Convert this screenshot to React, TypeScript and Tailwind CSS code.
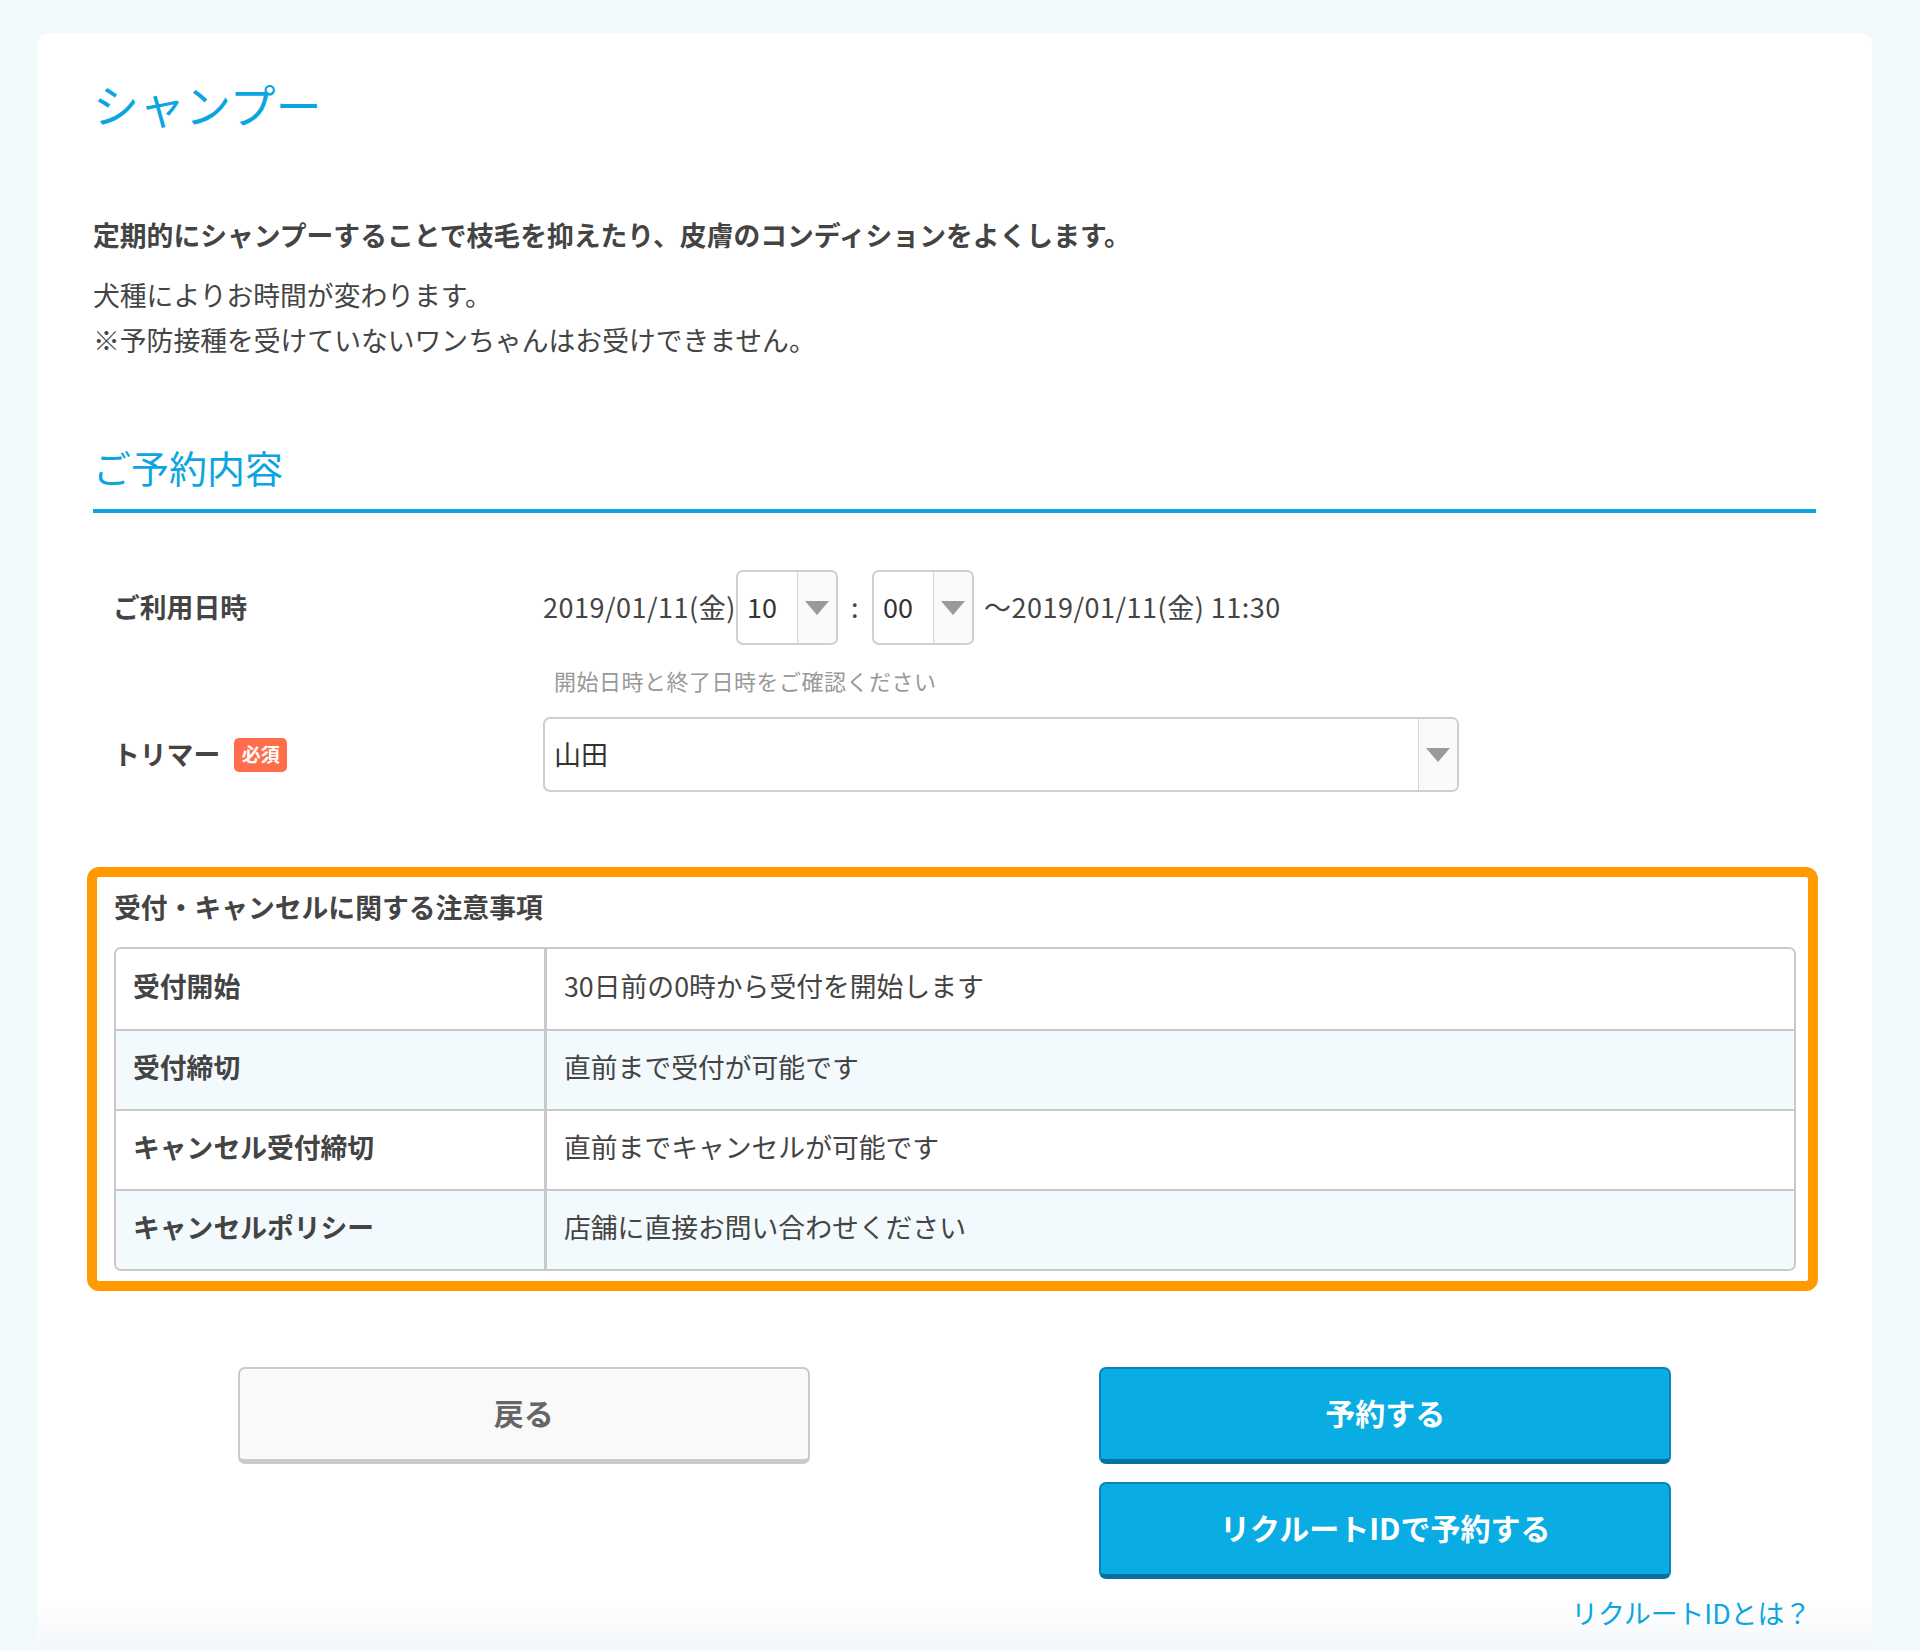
import React from 'react';

const JP = "font-['Noto_Sans_CJK_JP','Noto_Sans',sans-serif]";

interface SelectBoxProps {
  value: string;
  className?: string;
}

const Arrow: React.FC = () => (
  <svg width="24" height="14" viewBox="0 0 24 14" aria-hidden="true">
    <path d="M0 0H24L12 14Z" fill="#9a9a9a" />
  </svg>
);

// Fake select: value on the left, grey arrow cell on the right
const SelectBox: React.FC<SelectBoxProps> = ({ value, className = '' }) => (
  <div className={`flex h-[75px] overflow-hidden rounded-[7px] border-2 border-[#cfcfcf] bg-white ${className}`}>
    <div className="flex flex-1 items-center pl-[9px] text-[27px] tracking-normal text-[#333]">{value}</div>
    <div className="flex w-[39px] shrink-0 items-center justify-center border-l border-[#d6d6d6] bg-[#fafafa]">
      <Arrow />
    </div>
  </div>
);

const notes = [
  { label: '受付開始', value: '30日前の0時から受付を開始します' },
  { label: '受付締切', value: '直前まで受付が可能です' },
  { label: 'キャンセル受付締切', value: '直前までキャンセルが可能です' },
  { label: 'キャンセルポリシー', value: '店舗に直接お問い合わせください' },
];

export default function App() {
  return (
    <div className={`min-h-screen bg-[#f2f9fd] pt-[33px] ${JP}`}>
      <div className="ml-[37px] mr-[48px] rounded-t-[12px] bg-gradient-to-b from-white from-[97%] to-[#f4f7f9] pl-[56px] pr-[56px] pt-[38px] pb-[20px] text-[#444]">
        {/* Title */}
        <h1 className="text-[46px] leading-[64px] font-normal text-[#0ba5e1]">シャンプー</h1>

        {/* Description */}
        <p className="mt-[77px] text-[26.8px] leading-[46px] font-bold text-[#444]">
          定期的にシャンプーすることで枝毛を抑えたり、皮膚のコンディションをよくします。
        </p>
        <p className="mt-[14px] text-[26.8px] leading-[45px] text-[#444]">
          犬種によりお時間が変わります。
          <br />
          ※予防接種を受けていないワンちゃんはお受けできません。
        </p>

        {/* Section heading */}
        <h2 className="mt-[80px] border-b-4 border-[#0ba5e1] pb-[17px] text-[38px] leading-[50px] font-normal text-[#0ba5e1]">
          ご予約内容
        </h2>

        {/* Date row */}
        <div className="mt-[57px] grid grid-cols-[450px_1fr]">
          <div className="flex h-[75px] items-center pl-[20px] text-[26.8px] font-bold text-[#444]">ご利用日時</div>
          <div>
            <div className="flex h-[75px] items-center text-[27px] tracking-[0.5px] text-[#444]">
              <span className="w-[193px] whitespace-nowrap">2019/01/11(金)</span>
              <SelectBox value="10" className="w-[102px]" />
              <span className="mx-[13px]">:</span>
              <SelectBox value="00" className="w-[102px]" />
              <span className="ml-[10px] whitespace-nowrap">〜2019/01/11(金) 11:30</span>
            </div>
            <p className="mt-[20px] pl-[11px] text-[22px] leading-[30px] tracking-[0.5px] text-[#999]">開始日時と終了日時をご確認ください</p>
          </div>
        </div>

        {/* Trimmer row */}
        <div className="mt-[22px] grid grid-cols-[450px_1fr]">
          <div className="flex h-[75px] items-center pl-[20px] text-[26.8px] font-bold text-[#444]">
            トリマー
            <span className="ml-[14px] flex h-[34px] w-[53px] items-center justify-center rounded-[5px] bg-[#ff6d4a] text-[19px] font-bold text-white">
              必須
            </span>
          </div>
          <SelectBox value="山田" className="w-[916px]" />
        </div>

        {/* Notes */}
        <div className="mt-[75px] -ml-[6px] -mr-[2px] rounded-[12px] border-[10px] border-[#ff9a00] pl-[17px] pr-[12px] pt-[12px] pb-[10px]">
          <h3 className="text-[26.8px] leading-[36px] font-bold text-[#444]">受付・キャンセルに関する注意事項</h3>
          <div className="mt-[22px] overflow-hidden rounded-[7px] border-2 border-[#c9c9c9]">
            {notes.map((n, i) => (
              <div
                key={n.label}
                className={`grid h-[80px] grid-cols-[431px_1fr] ${i > 0 ? 'border-t-2 border-[#c9c9c9]' : ''} ${i % 2 === 1 ? 'bg-[#f3fafd]' : 'bg-white'}`}
              >
                <div className="flex items-center border-r-[3px] border-[#c9c9c9] pb-[6px] pl-[17px] text-[26.8px] font-bold text-[#444]">{n.label}</div>
                <div className="flex items-center pb-[6px] pl-[17px] text-[26.8px] text-[#444]">{n.value}</div>
              </div>
            ))}
          </div>
        </div>

        {/* Buttons */}
        <div className="mt-[76px] grid grid-cols-2">
          <div className="flex justify-center">
            <button className="h-[97px] w-[572px] rounded-[7px] border-2 border-b-[5px] border-[#cacaca] bg-[#f9f9f9] pb-[4px] text-[30px] font-bold text-[#666]">
              戻る
            </button>
          </div>
          <div className="flex flex-col items-center gap-[18px]">
            <button className="h-[97px] w-[572px] rounded-[7px] border-2 border-b-[5px] border-[#0a84b9] border-b-[#08709c] bg-[#09ade4] pb-[4px] text-[30px] font-bold text-white">
              予約する
            </button>
            <button className="h-[97px] w-[572px] rounded-[7px] border-2 border-b-[5px] border-[#0a84b9] border-b-[#08709c] bg-[#09ade4] pb-[4px] text-[30px] font-bold text-white">
              リクルートIDで予約する
            </button>
          </div>
        </div>

        <div className="mt-[19px] flex justify-end pr-[5px]">
          <a className="text-[26.8px] leading-[30px] text-[#0ba5e1]">リクルートIDとは？</a>
        </div>
      </div>
    </div>
  );
}
